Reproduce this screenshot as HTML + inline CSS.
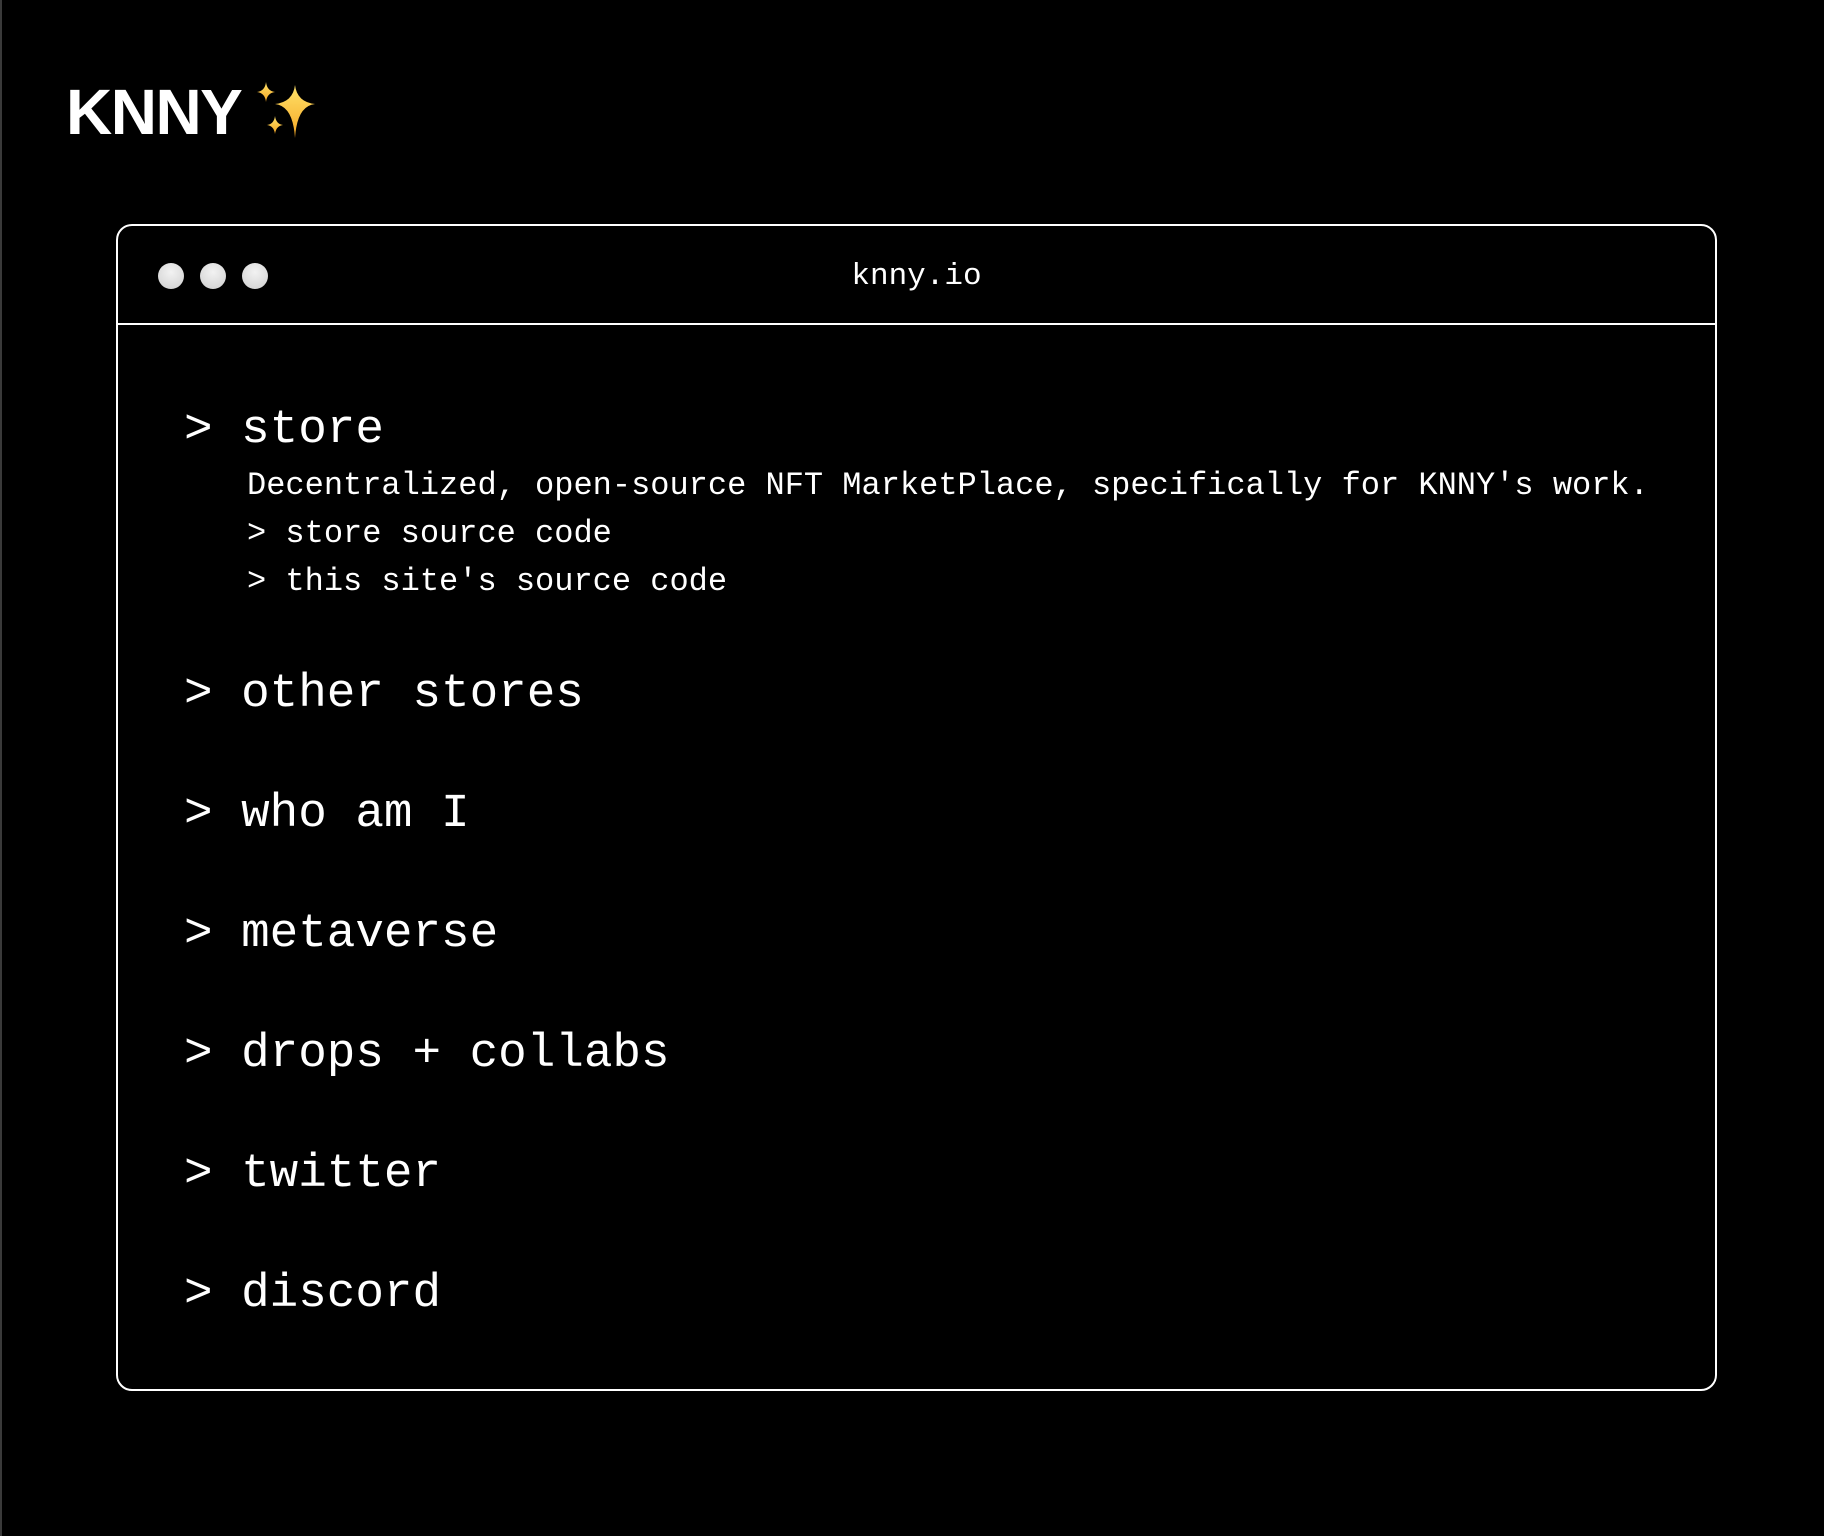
<!DOCTYPE html>
<html><head><meta charset="utf-8"><style>
html,body{margin:0;padding:0;background:#000;}
body{width:1824px;height:1536px;position:relative;overflow:hidden;font-family:"Liberation Mono",monospace;color:#fff;}
.strip{position:absolute;left:0;top:0;width:2px;height:1536px;background:#3a3a3a;}
.logo{position:absolute;left:66px;top:72px;font-family:"Liberation Sans",sans-serif;font-weight:bold;font-size:64px;line-height:80px;letter-spacing:-1.5px;}
.box{position:absolute;left:116px;top:224px;width:1597px;height:1163px;border:2px solid #fff;border-radius:16px;}
.hdr{position:absolute;left:0;top:0;width:100%;height:97px;border-bottom:2px solid #fff;}
.dot{position:absolute;top:37px;width:26px;height:26px;border-radius:50%;background:radial-gradient(circle at 50% 35%,#f2f2f2,#cfcfcf);}
.url{position:absolute;left:0;width:100%;top:31px;text-align:center;font-size:31px;line-height:40px;}
.big{position:absolute;left:184px;font-size:47.6px;line-height:60px;white-space:pre;}
.sm{position:absolute;left:247px;font-size:32px;line-height:40px;white-space:pre;}
</style></head><body>
<div class="strip"></div>
<div class="logo">KNNY</div>
<svg style="position:absolute;left:255px;top:82px" width="64" height="58" viewBox="0 0 64 58">
<defs><linearGradient id="g" x1="0" y1="0" x2="0" y2="1"><stop offset="0" stop-color="#ffe36b"/><stop offset="1" stop-color="#f5a623"/></linearGradient></defs>
<path d="M40 3 Q42 20 60 22 Q42 24 40 56 Q38 24 20 22 Q38 20 40 3Z" fill="url(#g)"/>
<path d="M11 0 Q12 9 20 10 Q12 11 11 20 Q10 11 2 10 Q10 9 11 0Z" fill="url(#g)"/>
<path d="M20 34 Q21 42 28 43 Q21 44 20 52 Q19 44 12 43 Q19 42 20 34Z" fill="url(#g)"/>
</svg>
<div class="box">
<div class="hdr">
<div class="dot" style="left:40px"></div>
<div class="dot" style="left:82px"></div>
<div class="dot" style="left:124px"></div>
<div class="url">knny.io</div>
</div>
</div>
<div class="big" style="top:400px">&gt; store</div>
<div class="sm" style="top:466px">Decentralized, open-source NFT MarketPlace, specifically for KNNY's work.</div>
<div class="sm" style="top:514px">&gt; store source code</div>
<div class="sm" style="top:562px">&gt; this site's source code</div>
<div class="big" style="top:664px">&gt; other stores</div>
<div class="big" style="top:784px">&gt; who am I</div>
<div class="big" style="top:904px">&gt; metaverse</div>
<div class="big" style="top:1024px">&gt; drops + collabs</div>
<div class="big" style="top:1144px">&gt; twitter</div>
<div class="big" style="top:1264px">&gt; discord</div>
</body></html>
